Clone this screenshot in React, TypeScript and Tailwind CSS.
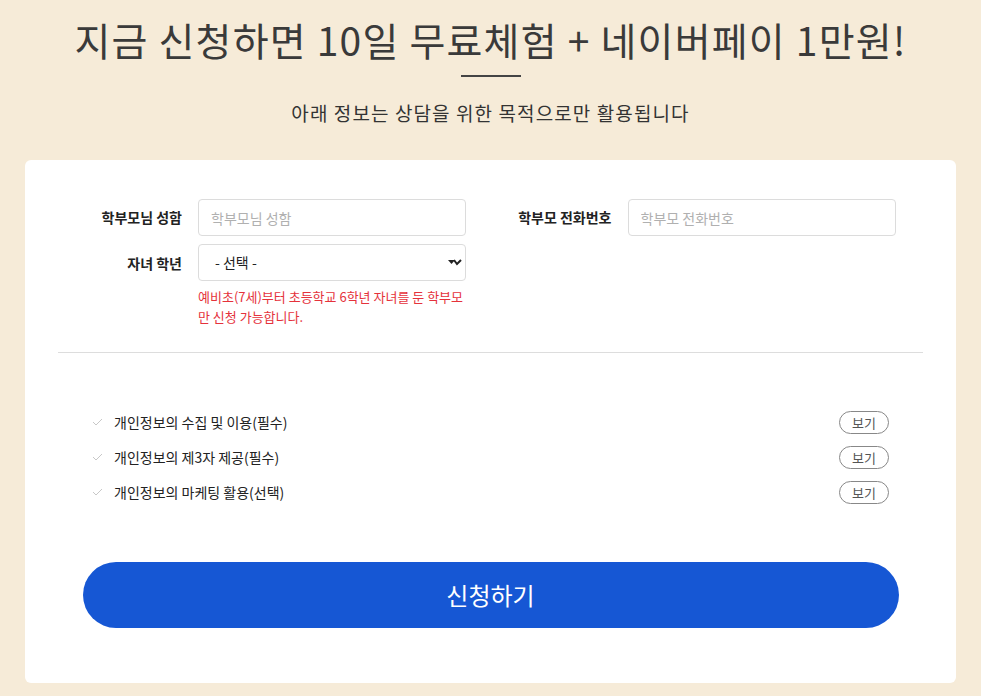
import { useState } from 'react';

const font = { fontFamily: '"Noto Sans CJK KR", "Noto Sans", sans-serif' };

const agreements = [
  '개인정보의 수집 및 이용(필수)',
  '개인정보의 제3자 제공(필수)',
  '개인정보의 마케팅 활용(선택)',
];

function Check() {
  return (
    <svg width="11" height="8" viewBox="0 0 11 8" className="shrink-0">
      <path d="M1 4l3 3 6-6" fill="none" stroke="#c8c8c8" strokeWidth="1" />
    </svg>
  );
}

export default function App() {
  const [grade, setGrade] = useState('');

  return (
    <div className="min-h-screen bg-[#f6ebd8] text-[#333]" style={font}>
      <div className="flex flex-col items-center pt-[11px]">
        <h1 className="text-[39px] leading-[56px] font-normal tracking-[1.2px] text-[#3a3a3a]">
          지금 신청하면 10일 무료체험 + 네이버페이 1만원!
        </h1>
        <div className="mt-[8px] h-[2px] w-[60px] bg-[#444]" />
        <p className="mt-[22px] text-[19px] leading-[28px] tracking-[1.1px] text-[#333]">
          아래 정보는 상담을 위한 목적으로만 활용됩니다
        </p>
      </div>

      <div className="mx-[25px] mt-[33px] rounded-[6px] bg-white px-[33px] pt-[39px] pb-[55px]">
        <div className="grid grid-cols-2 gap-x-[42px] px-[24px]">
          <div className="flex flex-col gap-[8px]">
            <div className="flex items-center gap-[16px]">
              <label className="w-[100px] text-right text-[14px] font-bold text-[#222]">학부모님 성함</label>
              <input
                placeholder="학부모님 성함"
                className="h-[37px] w-[268px] rounded-[4px] border border-[#dcdcdc] px-[12px] text-[14px] placeholder:text-[#b0b0b0] outline-none"
              />
            </div>
            <div className="flex items-start gap-[16px]">
              <label className="w-[100px] pt-[9px] text-right text-[14px] font-bold text-[#222]">자녀 학년</label>
              <div className="flex w-[268px] flex-col">
                <div className="relative">
                  <select
                    value={grade}
                    onChange={(e) => setGrade(e.target.value)}
                    className="h-[37px] w-full appearance-none rounded-[4px] border border-[#dcdcdc] bg-white px-[16px] text-[14px] text-[#222] outline-none"
                  >
                    <option value="">- 선택 -</option>
                    <option value="7">예비초(7세)</option>
                    <option value="1">1학년</option>
                    <option value="2">2학년</option>
                    <option value="3">3학년</option>
                    <option value="4">4학년</option>
                    <option value="5">5학년</option>
                    <option value="6">6학년</option>
                  </select>
                  <svg width="14" height="8" viewBox="0 0 14 8" className="pointer-events-none absolute right-[4px] top-[15px]">
                    <path d="M0 1h7L3.5 5z" fill="#222" />
                    <path d="M6 1l3 4 4-4" fill="none" stroke="#222" strokeWidth="2" />
                  </svg>
                </div>
                <p className="mt-[6px] text-[13px] leading-[20px] text-[#e5323b]">
                  예비초(7세)부터 초등학교 6학년 자녀를 둔 학부모만 신청 가능합니다.
                </p>
              </div>
            </div>
          </div>
          <div className="flex items-start gap-[16px]">
            <label className="w-[100px] pt-[8px] text-right text-[14px] font-bold text-[#222]">학부모 전화번호</label>
            <input
              placeholder="학부모 전화번호"
              className="h-[37px] w-[268px] rounded-[4px] border border-[#dcdcdc] px-[12px] text-[14px] placeholder:text-[#b0b0b0] outline-none"
            />
          </div>
        </div>

        <div className="mt-[25px] h-px bg-[#dddddd]" />

        <ul className="mt-[58px] flex flex-col gap-[13px] px-[34px]">
          {agreements.map((a) => (
            <li key={a} className="flex h-[22px] items-center">
              <Check />
              <span className="ml-[11px] flex-1 text-[14px] text-[#222]">{a}</span>
              <button className="h-[23px] w-[50px] rounded-full border border-[#888] text-[13px] leading-none text-[#555]">
                보기
              </button>
            </li>
          ))}
        </ul>

        <button className="mt-[59px] flex h-[66px] w-[816px] mx-auto items-center justify-center rounded-full bg-[#1657d4] text-[24px] text-white">
          신청하기
        </button>
      </div>
    </div>
  );
}
